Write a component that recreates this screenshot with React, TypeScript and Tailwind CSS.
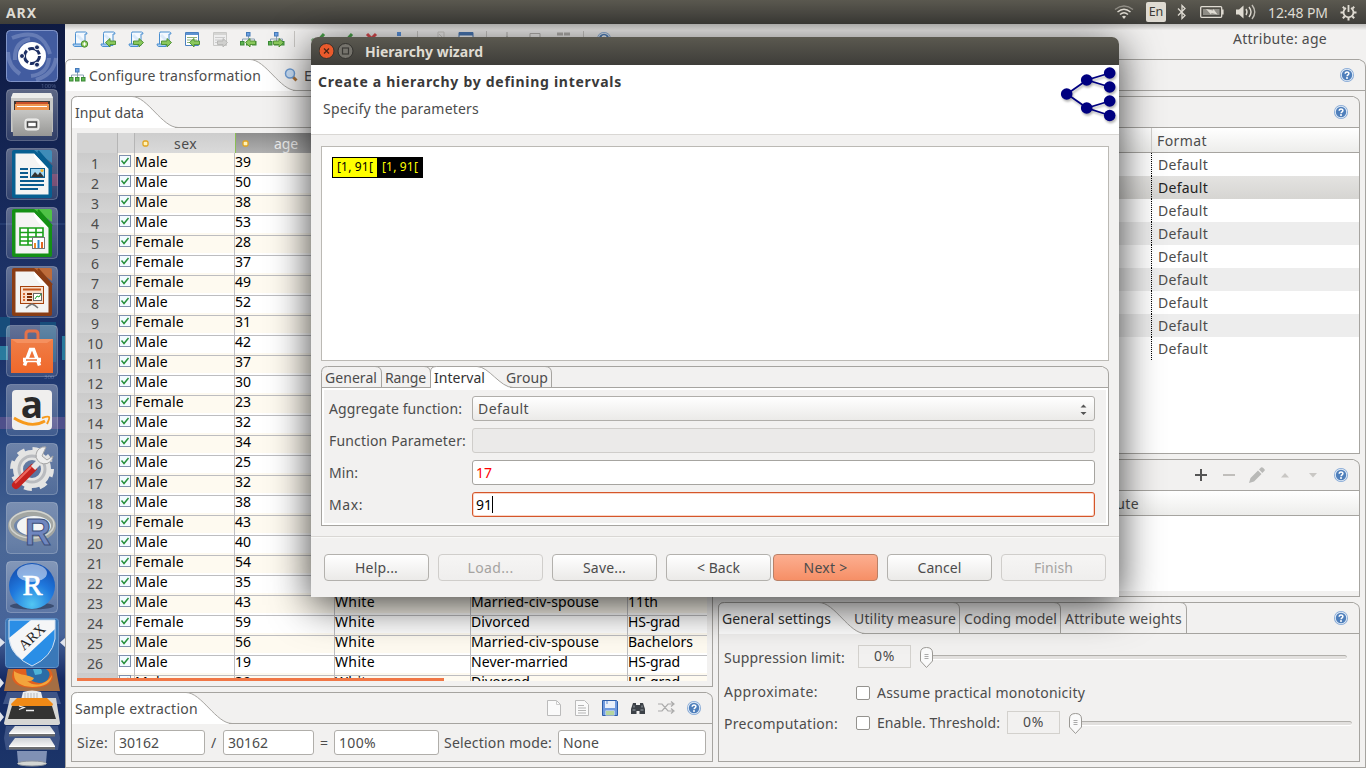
import { useLayoutEffect, useRef, useState, type ReactNode } from "react";

/** Text that spreads its letters so that the run is exactly `w` pixels wide. */
function Fit({ w, children, className = "" }: { w: number; children: string; className?: string }) {
  const ref = useRef<HTMLSpanElement>(null);
  const [spacing, setSpacing] = useState(0);
  useLayoutEffect(() => {
    const el = ref.current;
    if (el) setSpacing((w - el.getBoundingClientRect().width) / children.length);
  }, [w, children]);
  return (
    <span ref={ref} className={`inline-block shrink-0 whitespace-pre ${className}`} style={{ letterSpacing: spacing }}>
      {children}
    </span>
  );
}

/* ---------- tab folders ---------- */

type BarProps = { w: number; h: number; curve: number; start?: number; run?: number; seps?: number[]; plain?: boolean };

function BarOutline({ w, h, curve, start = 0, run = 43, seps = [], plain = false }: BarProps) {
  const s = start + 0.5;
  const b = h - 0.5;
  const tab = `M${s},${h} V6 Q${s},0.5 ${s + 6},0.5 H${curve} C${curve + run * 0.36},0.5 ${curve + run * 0.7},${b} ${curve + run + 3},${b}`;
  return (
    <svg width={w} height={h} className="absolute inset-0" fill="none" stroke="#a6a4a0">
      <path d={`M0.5,${h} V6.5 Q0.5,0.5 6.5,0.5 H${w - 6.5} L${w - 2},3 Q${w - 0.5},5 ${w - 0.5},8 V${h}`} />
      {seps.map((x) => (
        <path key={x} d={`M${x - 6},0.5 Q${x + 0.5},0.5 ${x + 0.5},7 V${b}`} />
      ))}
      {!plain && <path d={`${tab} V${h} Z`} fill="#fff" stroke="none" />}
      {!plain && <path d={tab} />}
      {!plain && <path d={`M${curve + run},${b} H${w}`} />}
      {start > 0 && <path d={`M0,${b} H${start}`} />}
      {plain && <path d={`M0,${b} H${w}`} />}
    </svg>
  );
}

function Folder({ bar, head, className, children, body = "" }: { bar: BarProps; head: ReactNode; className: string; children?: ReactNode; body?: string }) {
  return (
    <section className={`flex flex-col ${className}`}>
      <div className={`relative shrink-0 ${bar.h === 32 ? "h-8" : "h-[22px]"}`}>
        <BarOutline {...bar} />
        <div className="relative flex h-full items-center">{head}</div>
      </div>
      <div className={`min-h-0 flex-1 border-x border-b border-[#a6a4a0] ${body}`}>{children}</div>
    </section>
  );
}

/* ---------- small icons ---------- */

const Help = ({ className = "" }: { className?: string }) => (
  <svg width="16" height="16" viewBox="0 0 16 16" className={`shrink-0 ${className}`}>
    <circle cx="8" cy="8" r="7" fill="#7fa5d4" />
    <circle cx="8" cy="8" r="6.2" fill="#dfe9f5" />
    <circle cx="8" cy="8" r="5.200" fill="#4f7fbb" />
    <path d="M6.2 6.8c0-2.3 3.7-2.3 3.7-.2 0 1.200-1.800 1.300-1.800 2.600" fill="none" stroke="#fff" strokeWidth="1.500" />
    <circle cx="8" cy="11" r="1" fill="#fff" />
  </svg>
);

const greenArrow = (dir: string, grey = false) => (
  <path
    d={dir === "l" ? "M5.500 11.500l4.500-4v2.500h5.500v3.500h-5.500v2.500z" : "M15.500 11.500l-4.500-4v2.500h-5.500v3.500h5.500v2.500z"}
    fill={grey ? "#d0d0ce" : "#8ac85c"}
    stroke={grey ? "#b5b5b3" : "#4a8c30"}
    strokeWidth="0.900"
  />
);

const Scroll = ({ kind }: { kind: string }) => (
  <svg width="17" height="17" viewBox="0 0 17 17" className="shrink-0">
    <path d="M4 1h9.500q1.500 0 1.500 2H13v11.500H3.500V2.500z" fill="#f4f9ff" stroke="#4a8fd0" />
    <path d="M1 13h9v2.500H2.500Q1 15 1 13z" fill="#a9cdf0" stroke="#4a8fd0" />
    <path d="M5 4l7 7" stroke="#dbeafa" strokeWidth="3" />
    {kind === "+" ? (
      <>
        <circle cx="12.500" cy="13" r="3.200" fill="#8ac85c" stroke="#4a8c30" />
        <path d="M12.500 11.200v3.600M10.700 13h3.600" stroke="#fff" strokeWidth="1.200" />
      </>
    ) : (
      greenArrow(kind)
    )}
  </svg>
);

const Sheet = ({ dir, grey = false }: { dir: string; grey?: boolean }) => (
  <svg width="17" height="17" viewBox="0 0 17 17" className="shrink-0">
    <path d="M1.500 1.500h13v13h-13z" fill={grey ? "#eee" : "#fff"} stroke={grey ? "#c9c9c7" : "#4a80c0"} />
    <path d="M2 3h12" stroke={grey ? "#d5d5d3" : "#5d92d0"} strokeWidth="2" />
    <path d="M3 6.500h10M3 9h10M3 11.500h6" stroke={grey ? "#ccc" : "#8fb27a"} />
    {greenArrow(dir, grey)}
  </svg>
);

const Tree = ({ dir }: { dir?: string }) => (
  <svg width="17" height="17" viewBox="0 0 17 17" className="shrink-0">
    <path d="M8.500 4v4M2.500 11V8h12v3M8.500 8v3" fill="none" stroke="#8ba0b4" />
    <rect x="6.500" y="1.500" width="3.500" height="3.500" fill="#6ba0e2" stroke="#447ab8" />
    {[0.5, 6.5, 12.5].map((x) => (
      <rect key={x} x={x} y="10.500" width="3.500" height="3.500" fill="#5fb452" stroke="#3a8a36" />
    ))}
    {dir && greenArrow(dir)}
  </svg>
);

const Sep = ({ className = "" }: { className?: string }) => <i className={`h-4 w-px shrink-0 bg-[#c9c7c4] ${className}`} />;

function Toolbar() {
  return (
    <div className="flex h-[35px] shrink-0 items-start bg-gradient-to-b from-[#bfbebc] via-[#f2f1f0] via-[18%] to-[#f2f1f0] pl-[7px] pt-[7px]">
      <div className="flex gap-[11px]">
        <Scroll kind="+" />
        <Scroll kind="l" />
        <Scroll kind="r" />
        <Scroll kind="r" />
        <Sheet dir="l" />
        <Sheet dir="r" grey />
        <Tree dir="l" />
        <Tree dir="r" />
      </div>
      <Sep className="ml-[9px]" />
      <svg width="100" height="16" viewBox="0 0 100 16" className="ml-4 shrink-0" fill="none" strokeWidth="3">
        <path d="M1 8l4 4 8-9M29 8l4 4 8-9" stroke="#4aa14a" />
        <path d="M56 3l9 9M65 3l-9 9" stroke="#dc4b50" />
        <rect x="86" y="1" width="4" height="4" fill="#5b93dc" />
      </svg>
      <Sep className="ml-1.5" />
      <svg width="52" height="16" viewBox="0 0 52 16" className="ml-[14px] shrink-0">
        <path d="M6 1h6v12H6zM7 3l4 4" stroke="#cfcdca" fill="none" />
        <path d="M27 1.500h14v13H27z" fill="#fff" stroke="#4a78b5" />
        <path d="M27 3h14" stroke="#4a78b5" strokeWidth="3" />
      </svg>
      <Sep className="ml-0.5" />
      <svg width="80" height="16" viewBox="0 0 80 16" className="ml-3 shrink-0" fill="none" stroke="#b3b1ae">
        <path d="M8 1v4l-3 8M8 5l3 8M31 2.500h10v9H31z" />
        <path d="M58 3h6M65 3h6" strokeWidth="3" />
      </svg>
      <Sep className="ml-1" />
      <Help className="ml-3" />
      <Fit w={94} className="ml-[621px] mt-[-2px] leading-5">Attribute: age</Fit>
    </div>
  );
}

/* ---------- top panel ---------- */

function TopPanel() {
  return (
    <header className="flex h-6 shrink-0 items-center bg-gradient-to-b from-[#5b5950] to-[#3e3d39] text-[#dfdbd2]">
      <Fit w={31} className="ml-1.5 text-[14px] font-bold">ARX</Fit>
      <div className="ml-auto flex items-center pr-[9px]">
        <svg width="20" height="16" viewBox="0 0 20 16" fill="none" stroke="currentColor" strokeWidth="1.500">
          <path d="M1 5.500Q10-1.500 19 5.500" opacity=".45" />
          <path d="M3.500 8Q10 2.500 16.500 8M6 10.500Q10 7 14 10.500" />
          <path d="M8 12.500Q10 11 12 12.500L10 15z" fill="currentColor" stroke="none" />
        </svg>
        <span className="ml-3 flex h-5 w-5 items-center justify-center rounded-[2px] bg-[#dfdbd2] text-[12.5px] text-[#3c3b37]">En</span>
        <svg width="10" height="16" viewBox="0 0 10 16" className="ml-[11px]" fill="none" stroke="currentColor" strokeWidth="1.300">
          <path d="M1 4.500l7 7-3 3V1.500l3 3-7 7" />
        </svg>
        <svg width="24" height="14" viewBox="0 0 24 14" className="ml-[13px]">
          <rect x=".7" y="1.700" width="21" height="10.600" rx="1" fill="none" stroke="currentColor" strokeWidth="1.300" />
          <path d="M22 4.500h1.600v5H22z" fill="currentColor" />
          <rect x="3" y="4" width="16.500" height="6" fill="#8f8d86" />
          <path d="M6 4l7 1.500.5-1.500 4 5.500-6-1.500-.5 1.500z" fill="currentColor" />
        </svg>
        <svg width="20" height="16" viewBox="0 0 20 16" className="ml-3" fill="none" stroke="currentColor" strokeWidth="1.400">
          <path d="M0 5.500h3l4.500-4v13l-4.500-4H0z" fill="currentColor" stroke="none" />
          <path d="M10 5q2 3 0 6M13 3q4 5 0 10" />
          <path d="M16 1q5.500 7 0 14" opacity=".8" />
        </svg>
        <Fit w={60} className="ml-3 text-[14px]">12:48 PM</Fit>
        <svg width="17" height="17" viewBox="0 0 17 17" className="ml-3" fill="none" stroke="currentColor">
          <path d="M6 4a5 5 0 1 0 5 0" strokeWidth="1.800" />
          <path d="M8.500 1v7" strokeWidth="1.800" />
          <path d="M.5 8.500h2.500M14 8.500h2.500M2.800 14.200l2-2M14.200 14.200l-2-2M2.800 2.800l1.800 1.800M14.200 2.800l-1.800 1.800M8.500 14v2.500" strokeWidth="2" />
        </svg>
      </div>
    </header>
  );
}

/* ---------- launcher ---------- */

function Office({ dark, light, children }: { dark: string; light: string; children: ReactNode }) {
  return (
    <>
      <path d="M8 2h22l16 17v29q0 2-2 2H8q-2 0-2-2V4q0-2 2-2z" fill={dark} />
      <path d="M28 2h16q2 0 2 2v11z" fill={light} />
      <path d="M32 3l14 16" stroke={dark} strokeWidth="2" />
      <path d="M9.500 5.500H28L42.500 21v25.500h-33z" fill="#f4f4f3" />
      <path d="M28 5.500V9q6 12 14.500 12z" fill="#fff" />
      {children}
    </>
  );
}

const tiles: ReactNode[] = [
  <>
    <rect x=".5" y=".5" width="51" height="51" rx="4" fill="#425ca0" stroke="#8094c8" />
    <g fill="none" stroke="#a9b8dc" strokeWidth="4" opacity=".35">
      <path d="M9 30Q8 12 24 9M6 8q30-12 38 16M43 28q-1 16-18 18M14 44Q2 36 2 22M30 50q18-6 20-22" />
    </g>
    <circle cx="26" cy="26" r="14" fill="#fff" />
    <circle cx="26" cy="26" r="7.500" fill="none" stroke="#1c2e63" strokeWidth="3" strokeDasharray="13.700 2" />
    <circle cx="16" cy="26" r="2.500" fill="#1c2e63" stroke="#fff" />
    <circle cx="31" cy="17.300" r="2.500" fill="#1c2e63" stroke="#fff" />
    <circle cx="31" cy="34.700" r="2.500" fill="#1c2e63" stroke="#fff" />
  </>,
  <>
    <path d="M7 4h38l2 5v34H5V9z" fill="#c9c9c7" />
    <path d="M7 4h38l2 5H5z" fill="#ececea" />
    <rect x="8" y="12" width="36" height="10" fill="#3f3a36" />
    <path d="M10 13h32v5H10z" fill="#c8502a" />
    <path d="M9 15h34v7H9z" fill="#ee9650" />
    <path d="M11 17.500h30" stroke="#fff" />
    <path d="M8 21h36l3 3-1 23H7L6 24z" fill="url(#steel)" />
    <rect x="19" y="30" width="14" height="11" rx="2.500" fill="#dededc" stroke="#f5f5f4" />
    <rect x="21.500" y="33" width="9" height="5" fill="#fff" stroke="#444" strokeWidth="1.500" />
  </>,
  <Office dark="#075f91" light="#3f8cb8">
    <path d="M14 21h8M14 25h8M14 29h8M14 33h24M14 37h24M14 41h18" stroke="#0c5c8f" strokeWidth="2" />
    <rect x="24.500" y="20.500" width="14" height="9" fill="#a5d8f3" stroke="#0c5c8f" />
    <path d="M25 29l4-5 3 3 2-3 4 5z" fill="#333" />
    <circle cx="36" cy="22.500" r="1.500" fill="#f6b22e" />
  </Office>,
  <Office dark="#149015" light="#4fc246">
    <path d="M14 21h23v17H14zM14 25.500h23M14 30h23M14 34h23M22 21v17M30 21v17" fill="#fff" stroke="#18a018" strokeWidth="1.600" />
    <rect x="26.500" y="30.500" width="12" height="11" fill="#fff" stroke="#777" />
    <path d="M29 41v-5" stroke="#f08a28" strokeWidth="2" />
    <path d="M32.500 41v-8" stroke="#2b82cc" strokeWidth="2" />
    <path d="M36 41v-6" stroke="#e4651f" strokeWidth="2" />
  </Office>,
  <Office dark="#8a3d15" light="#bd6c3b">
    <rect x="14.500" y="20.500" width="23" height="17" fill="#f8dfcc" stroke="#a6420d" />
    <path d="M17 23.500h18" stroke="#c4561c" strokeWidth="2" />
    <path d="M17 28h2M17 31h2M17 34h2" stroke="#d76b33" strokeWidth="2" />
    <path d="M21 28h5M21 31h5M21 34h5" stroke="#7c2c04" strokeWidth="2" />
    <rect x="27.500" y="27.500" width="8" height="7" fill="#fff" stroke="#666" />
    <path d="M29 33l2-3 2 1 2-3" fill="none" stroke="#19a22c" />
    <path d="M20 42q3-3 6-4 3 1 6 4" fill="none" stroke="#777" strokeWidth="1.500" />
  </Office>,
  <>
    <path d="M20 18V9q0-3 3-3h6q3 0 3 3v9" fill="none" stroke="#e5724a" strokeWidth="3" />
    <path d="M5 14h42v34H5z" fill="url(#bag)" />
    <path d="M5 14h42l-6 4H11z" fill="#f5905e" />
    <path d="M18.500 40.500l6-16h3l6 16" fill="none" stroke="#fff" strokeWidth="3.500" />
    <path d="M17 35h18" stroke="#fff" strokeWidth="4.500" />
    <path d="M20 35h11" stroke="#ee7136" strokeWidth="1.500" />
  </>,
  <>
    <rect x="6" y="6" width="40" height="40" rx="4" fill="#f0efee" />
    <text x="26" y="34" textAnchor="middle" fontFamily="Open Sans, sans-serif" fontWeight="700" fontSize="37" fill="#2a2a2a">a</text>
    <path d="M8 34q17 11 31 3" fill="none" stroke="#f79a1c" strokeWidth="2.800" />
    <path d="M36 34q6-2 7-1t-2 7" fill="none" stroke="#f79a1c" strokeWidth="2" />
  </>,
  <>
    <circle cx="26" cy="26" r="14" fill="none" stroke="#e4e4e3" strokeWidth="10" />
    <circle cx="26" cy="26" r="19.500" fill="none" stroke="#e4e4e3" strokeWidth="5" strokeDasharray="7.600 7.700" />
    <circle cx="26" cy="26" r="13" fill="none" stroke="#b9bbbf" strokeWidth="3" />
    <path d="M10 42l17-17" stroke="#c5221f" strokeWidth="8" strokeLinecap="round" />
    <path d="M9 40l16-16" stroke="#ee6a60" strokeWidth="2" />
    <path d="M27 25l8-8" stroke="#e6e6e6" strokeWidth="6" />
    <path d="M40 4a8.500 8.500 0 1 0 7 9l-6 4-5-4z" fill="#ededed" stroke="#a5a5a5" />
  </>,
  <>
    <ellipse cx="26" cy="24" rx="21" ry="13" fill="none" stroke="#a3a6a2" strokeWidth="6" />
    <ellipse cx="28" cy="24" rx="17" ry="10" fill="#f2f4f5" />
    <ellipse cx="26" cy="22.500" rx="22" ry="13.500" fill="none" stroke="#d2d4d0" strokeWidth="1.500" />
    <text x="19" y="43" fontFamily="Liberation Sans, sans-serif" fontWeight="700" fontSize="36" fill="#6f86bf" stroke="#3c4e78" strokeWidth="1">R</text>
  </>,
  <>
    <ellipse cx="26" cy="45" rx="22" ry="3.500" fill="#22314e" opacity=".6" />
    <circle cx="26" cy="25" r="23" fill="url(#orb)" />
    <ellipse cx="26" cy="12" rx="15" ry="9" fill="#fff" opacity=".5" />
    <text x="26.500" y="34" textAnchor="middle" fontFamily="Liberation Serif, serif" fontSize="30" fill="#fff" stroke="#fff" strokeWidth=".7">R</text>
  </>,
];

function Launcher() {
  return (
    <nav className="relative flex w-[65px] shrink-0 flex-col overflow-hidden bg-[linear-gradient(180deg,#0e1a42_0%,#172a5c_25%,#1d3266_33%,#1b2f66_43%,#26467f_55%,#4a6796_70%,#47649a_82%,#152a64_88%,#1c3569_100%)]">
      <svg width="65" height="744" className="absolute inset-0">
        <defs>
          <radialGradient id="orb" cx=".5" cy=".9" r=".8">
            <stop offset="0" stopColor="#52c6f2" />
            <stop offset=".6" stopColor="#1f78dd" />
            <stop offset="1" stopColor="#1756b8" />
          </radialGradient>
          <linearGradient id="glass" x2="0" y2="1">
            <stop offset="0" stopColor="#fff" stopOpacity=".32" />
            <stop offset="1" stopColor="#fff" stopOpacity=".12" />
          </linearGradient>
          <linearGradient id="steel" x2="0" y2="1">
            <stop offset="0" stopColor="#c6c6c4" />
            <stop offset="1" stopColor="#979795" />
          </linearGradient>
          <linearGradient id="drive" x2="0" y2="1">
            <stop offset="0" stopColor="#cfd2d6" />
            <stop offset="1" stopColor="#f3f3f3" />
          </linearGradient>
          <linearGradient id="bag" x2="0" y2="1">
            <stop offset="0" stopColor="#ef7e48" />
            <stop offset="1" stopColor="#f0682a" />
          </linearGradient>
        </defs>
        <path d="M0 293h10v20H0zM40 298h16v40H40z" fill="#155a85" opacity=".7" />
        <path d="M0 322h8v14H0zM62 312h3v24h-3z" fill="#2f9ab5" opacity=".7" />
        <path d="M52 150h6v12h-6z" fill="#8c2c58" opacity=".6" />
        <path d="M0 393h65v12H0z" fill="#7a5c9a" opacity=".5" />
        <path d="M0 200h65" stroke="#4a68a0" opacity=".5" />
        <g fill="#8fa2cc" fontSize="6" opacity=".45">
          <text x="41" y="64">100%</text>
          <text x="44" y="355">300</text>
        </g>
      </svg>
      <div className="relative flex flex-col gap-[7px] pl-1.5 pt-1.5">
        {tiles.map((tile, i) => (
          <svg key={i} width="52" height="52" viewBox="0 0 52 52">
            <rect x=".5" y=".5" width="51" height="51" rx="4" fill="url(#glass)" stroke="#fff" strokeOpacity=".25" />
            {tile}
          </svg>
        ))}
      </div>
      <svg width="65" height="153" viewBox="0 0 65 153" className="relative mt-0.5 shrink-0">
        <path d="M0 23l5 4.500-5 4.500zM65 23l-5 4.500 5 4.500zM0 63l4 5-4 5zM0 97l4 5-4 5z" fill="#dfe3ec" />
        <path d="M8 54h48l4 22H4z" fill="#b5753f" opacity=".9" />
        <path d="M14 54h36q3 4 3 8-2 11-21 11-19-1-20-11 0-4 2-8z" fill="#e0601f" />
        <path d="M26 54h20q5 3 3 8-2 6-10 6-8-1-12-6z" fill="#2b6ca6" />
        <path d="M33 54h8q2 3 0 5l-6 1z" fill="#4db4d8" />
        <path d="M14 56q4 3 11 4 5 1 9 3-2 4-7 3 6 5 14 3 8-3 11-9-1 12-20 12-17-1-18-12z" fill="#f3a43c" />
        <path d="M7 77h50l4 12H3z" fill="#8aa0c8" opacity=".35" />
        <path d="M23 77q9-3 18 0l2 8H21z" fill="#eceef0" />
        <path d="M25 78v5M28 78v5M31 78v5M34 78v5M37 78v5" stroke="#b9bcc0" />
        <path d="M10 83h46l4 25q0 2-3 2H7q-3 0-3-2z" fill="#d6d6d4" />
        <path d="M17 83h30l6 6q0 2-2 2H13q-2 0-2-2z" fill="#f08a16" />
        <path d="M12 91h40l4 13H8z" fill="#333332" />
        <path d="M19 91l5 1.500-5 2M26 95.500h8" stroke="#eee" fill="none" strokeWidth="1.300" />
        <path d="M6 111h52l2 12-2 12H6l-2-12z" fill="#8aa0c8" opacity=".3" />
        <path d="M15 111h35l5 7H9z" fill="url(#drive)" />
        <path d="M9 118h46v3.500H9z" fill="#6d6e70" />
        <path d="M9 118.500h46" stroke="#fff" />
        <path d="M15 123h35l5 8H9z" fill="url(#drive)" />
        <path d="M9 131h46v3.500H9z" fill="#6d6e70" />
        <path d="M9 131.500h46" stroke="#fff" />
        <path d="M17 136h30l-1 12H18z" fill="#9aa9c8" opacity=".8" />
        <ellipse cx="32" cy="148.500" rx="14.500" ry="2.500" fill="#d3d6d4" stroke="#8e949c" />
        <rect x="5.500" y="3.500" width="53" height="49" rx="3" fill="#3a78b8" stroke="#5f8fc6" />
        <path d="M9 5h46v19q-3 18-23 27Q12 42 9 24z" fill="#2a8ee6" />
        <path d="M31 5h24v9L22 45q-13-9-13-22z" fill="#f5f6f7" />
        <path d="M9 5h46v19q-3 18-23 27Q12 42 9 24z" fill="none" stroke="#cfe0f2" />
        <text transform="translate(24,36) rotate(-43)" fontFamily="Liberation Serif, serif" fontSize="14.500" fill="#222">ARX</text>
      </svg>
    </nav>
  );
}

/* ---------- input table ---------- */

const people: [string, number][] = [
  ["Male", 39], ["Male", 50], ["Male", 38], ["Male", 53], ["Female", 28], ["Female", 37], ["Female", 49],
  ["Male", 52], ["Female", 31], ["Male", 42], ["Male", 37], ["Male", 30], ["Female", 23], ["Male", 32],
  ["Male", 34], ["Male", 25], ["Male", 32], ["Male", 38], ["Female", 43], ["Male", 40], ["Female", 54],
  ["Male", 35], ["Male", 43], ["Female", 59], ["Male", 56], ["Male", 19], ["Male", 39],
];
const more: Record<number, [string, number, string, number]> = {
  22: ["Married-civ-spouse", 128, "11th", 30],
  23: ["Divorced", 59, "HS-grad", 52],
  24: ["Married-civ-spouse", 128, "Bachelors", 65],
  25: ["Never-married", 97, "HS-grad", 52],
  26: ["Divorced", 59, "HS-grad", 52],
};
const cell = "border-b border-r border-[#bdbdc0] leading-[17px]";

const Dot = () => (
  <svg width="7" height="7" className="shrink-0">
    <rect x="1" y="1" width="5" height="5" rx="1.500" fill="#fff3b8" stroke="#e0a320" strokeWidth="1.300" />
  </svg>
);

function InputTable() {
  return (
    <div className="relative h-[548px] w-[630px] overflow-hidden text-black">
      <div className="grid h-5 grid-cols-[41px_17px_100px_100px_136px_157px_79px] text-[#4c4c4c]">
        <i className="border-r border-[#b5b5b5] bg-[#d3d3d3]" />
        <i className="border-r border-[#b5b5b5] bg-[#d8d8d8]" />
        <div className="flex bg-gradient-to-b from-[#cdcdcd] to-[#dadada] pl-[7px] pt-[7px]">
          <Dot />
          <Fit w={23} className="ml-[25px] mt-[-4px] leading-4">sex</Fit>
        </div>
        <div className="flex border-l border-[#8bbf55] bg-gradient-to-b from-[#8e8e8e] to-[#b0b0b0] pl-[6px] pt-[7px] text-[#eee]">
          <Dot />
          <Fit w={24} className="ml-[25px] mt-[-4px] leading-4">age</Fit>
        </div>
      </div>
      {people.map(([sex, age], i) => (
        <div key={i} className={`grid h-5 grid-cols-[41px_17px_100px_100px_136px_157px_79px] ${i % 2 ? "bg-white" : "bg-[#fefaf0]"}`}>
          <div className="flex justify-center border-b border-r border-[#c4c4c4] bg-gradient-to-b from-[#cbcbcb] to-[#d5d5d5] pr-1 leading-[22px] text-[#4c4c4c]">
            {i < 26 && <Fit w={i < 9 ? 8 : 16}>{String(i + 1)}</Fit>}
          </div>
          <div className="border-b border-r border-[#bdbdc0] pl-px pt-0.5">
            <svg width="12" height="12">
              <rect x=".5" y=".5" width="11" height="11" fill="#f2faff" stroke="#7f90ad" />
              <path d="M2.500 5.500l2.500 3 4.500-5.500" fill="none" stroke="#26903a" strokeWidth="1.500" />
            </svg>
          </div>
          <div className={cell}><Fit w={sex === "Male" ? 33 : 49}>{sex}</Fit></div>
          <div className={cell}><Fit w={16}>{String(age)}</Fit></div>
          <div className={cell}>{more[i] && <Fit w={40}>White</Fit>}</div>
          <div className={cell}>{more[i] && <Fit w={more[i][1]}>{more[i][0]}</Fit>}</div>
          <div className="border-b border-[#bdbdc0] leading-[17px]">{more[i] && <Fit w={more[i][3]}>{more[i][2]}</Fit>}</div>
        </div>
      ))}
      <div className="absolute bottom-0 left-0 h-[3px] w-[367px] bg-[#f07746]" />
    </div>
  );
}

const field = "flex h-[25px] items-center rounded-[3px] border border-[#b0aeaa] bg-white pl-1";

function SampleIcons() {
  return (
    <div className="ml-auto flex items-center gap-3 pr-[11px]">
      <svg width="16" height="16"><path d="M1.500.5h9l4 4v11h-13z" fill="#fafafa" stroke="#bbb" /><path d="M10.500.5v4h4" fill="none" stroke="#ccc" /></svg>
      <svg width="16" height="16"><path d="M1.500.5h9l4 4v11h-13z" fill="#fafafa" stroke="#bbb" /><path d="M4 5.500h6M4 8h8M4 10.500h8M4 13h8" stroke="#b5b5b5" /></svg>
      <svg width="16" height="16"><path d="M.5.5h14l1 1v14H.5z" fill="#6f9ade" stroke="#2c5da8" /><path d="M3 1h10v7H3z" fill="#e9f0fa" /><path d="M3.500 10.500h9v5h-9z" fill="#f2f7f0" /><path d="M4 12h8M4 14h8" stroke="#7ab34c" /><path d="M5 1v3" stroke="#5888d2" /></svg>
      <svg width="16" height="16"><path d="M3 3h3v2h4V3h3l2 6v5H9.500v-3h-3v3H1V9z" fill="#3c4147" /><path d="M2.500 10h3M10.500 10h3M4 5.500v2M12 5.500v2" stroke="#9aa3ab" /></svg>
      <svg width="17" height="16" fill="none" stroke="#aaa" strokeWidth="1.200"><path d="M0 4h4l6 7h5M0 11h4l6-7h5M13 1.500l3 2.500-3 2.500M13 8.500l3 2.500-3 2.500" /></svg>
      <Help className="ml-[-1px]" />
    </div>
  );
}

const Slider = ({ className = "" }: { className?: string }) => (
  <div className={`flex h-[23px] items-center pt-0.5 ${className}`}>
    <svg width="13" height="21" viewBox="0 0 13 21" className="z-10 mr-[-1px] shrink-0">
      <path d="M.5 6q0-5.500 6-5.500t6 5.500v8l-6 6.500-6-6.500z" fill="#fafafa" stroke="#9b9995" />
      <path d="M4.500 7.500h4M4.500 9.500h4M4.500 11.500h4" stroke="#aaa" />
    </svg>
    <i className="mt-[-1px] h-[5px] flex-1 rounded-r-sm border-b border-t border-b-white border-t-[#b1afab] bg-[#e2e0de]" />
  </div>
);

const percentBox = "flex h-[23px] w-[53px] shrink-0 items-center justify-center border border-[#d3d1cd] pb-0.5";
const checkbox = "h-3.5 w-3.5 shrink-0 rounded-[2px] border border-[#94928e] bg-white";

function Workspace() {
  return (
    <main className="flex w-[1301px] flex-col bg-[#f2f1f0]">
      <Toolbar />
      <Folder
        className="h-[709px]"
        bar={{ w: 1301, h: 32, curve: 185 }}
        body="flex gap-[5px] px-[5px] pt-[5px]"
        head={
          <>
            <span className="ml-1"><Tree /></span>
            <Fit w={172} className="ml-[3px]">Configure transformation</Fit>
            <svg width="15" height="15" className="ml-[23px]">
              <path d="M8.500 8.500l4 4" stroke="#a9713a" strokeWidth="3" />
              <circle cx="6" cy="5.500" r="4.500" fill="#c9def5" stroke="#6b9ad2" strokeWidth="1.500" />
            </svg>
            <span className="ml-[5px]">E</span>
            <Help className="ml-auto mr-[11px]" />
          </>
        }
      >
        <div className="flex w-[642px] flex-col gap-[5px]">
          <Folder className="h-[591px]" bar={{ w: 642, h: 32, curve: 61 }} body="pl-[5px] pt-[5px]" head={<Fit w={69} className="ml-1">Input data</Fit>}>
            <InputTable />
          </Folder>
          <Folder
            className="h-[70px]"
            bar={{ w: 642, h: 32, curve: 115 }}
            body="flex items-start pl-[5px] pt-1.5 leading-[25px]"
            head={<><Fit w={123} className="ml-1">Sample extraction</Fit><SampleIcons /></>}
          >
            <Fit w={31}>Size:</Fit>
            <div className={`ml-1.5 w-[91px] shrink-0 ${field}`}><Fit w={40}>30162</Fit></div>
            <span className="ml-1.5 w-[6px]">/</span>
            <div className={`ml-[6px] w-[91px] shrink-0 ${field}`}><Fit w={40}>30162</Fit></div>
            <span className="ml-1.5 w-2">=</span>
            <div className={`ml-1.5 w-[105px] shrink-0 ${field}`}><Fit w={37}>100%</Fit></div>
            <Fit w={108} className="ml-[5px]">Selection mode:</Fit>
            <div className={`ml-1.5 w-[148px] shrink-0 ${field}`}><Fit w={36}>None</Fit></div>
          </Folder>
        </div>
        <div className="flex w-[642px] flex-col gap-[5px]">
          <Folder className="h-[358px]" bar={{ w: 642, h: 32, curve: 0, plain: true }} body="bg-white" head={<Help className="ml-auto mr-[11px]" />}>
            <div className="flex h-[25px] items-center border-b border-[#a6a4a0] bg-gradient-to-b from-white to-[#ededeb]">
              <div className="ml-[432px] flex h-full items-center border-l border-[#d2d0cd] pl-[5px]"><Fit w={50}>Format</Fit></div>
            </div>
            {Array.from({ length: 9 }, (_, i) => (
              <div key={i} className={`flex h-[23px] items-center ${i === 1 ? "bg-gradient-to-b from-[#e4e3e1] to-[#d6d5d2] text-[#222]" : i % 2 ? "bg-[#ededed]" : "bg-white"}`}>
                <div className="ml-[432px] flex h-full items-center border-l border-dotted border-black pl-1.5"><Fit w={50}>Default</Fit></div>
              </div>
            ))}
          </Folder>
          <Folder
            className="h-[138px]"
            bar={{ w: 642, h: 32, curve: 0, plain: true }}
            body="pb-[5px]"
            head={
              <div className="ml-auto flex items-center gap-3 pr-[11px]">
                <svg width="16" height="16" stroke="#555" strokeWidth="2"><path d="M2 8h12M8 2v12" /></svg>
                <svg width="16" height="16" stroke="#c0bebb" strokeWidth="2"><path d="M2 8h12" /></svg>
                <svg width="16" height="16" fill="#b9b9b7"><path d="M0 16l1.500-5 7.500-7.500 3.500 3.500L5 14.500zM10 2.500L12 .5q1-.8 2 .2l1.500 1.500q.8 1-.2 1.800l-2 2z" /></svg>
                <svg width="16" height="16" fill="#c9c7c4"><path d="M8 6l4 4.500H4z" /></svg>
                <svg width="16" height="16" fill="#c9c7c4"><path d="M8 10.500L12 6H4z" /></svg>
                <Help />
              </div>
            }
          >
            <div className="flex h-[25px] items-center border-b border-[#a6a4a0] bg-gradient-to-b from-white to-[#ededeb]">
              <div className="flex w-[420px] justify-end"><Fit w={62}>Attribute</Fit></div>
            </div>
            <div className="h-[75px] bg-white" />
          </Folder>
          <Folder
            className="h-[160px]"
            bar={{ w: 642, h: 32, curve: 101, seps: [241, 342, 468] }}
            body="flex flex-col pl-[5px] pt-[11px]"
            head={
              <>
                <Fit w={109} className="ml-1 text-[#2f2f2f]">General settings</Fit>
                <Fit w={102} className="ml-[23px]">Utility measure</Fit>
                <Fit w={93} className="ml-2">Coding model</Fit>
                <Fit w={117} className="ml-2">Attribute weights</Fit>
                <Help className="ml-auto mr-[11px]" />
              </>
            }
          >
            <div className="flex h-[23px] items-center">
              <div className="w-[134px] shrink-0 pt-0.5"><Fit w={121}>Suppression limit:</Fit></div>
              <div className={percentBox}><Fit w={21}>0%</Fit></div>
              <Slider className="ml-[9px] mr-3 flex-1" />
            </div>
            <div className="mt-[14px] flex h-[21px] items-center">
              <div className="w-[132px] shrink-0 pb-0.5"><Fit w={94}>Approximate:</Fit></div>
              <i className={checkbox} />
              <Fit w={208} className="ml-[7px]">Assume practical monotonicity</Fit>
            </div>
            <div className="mt-[8px] flex h-[23px] items-center">
              <div className="w-[132px] shrink-0 pt-0.5"><Fit w={114}>Precomputation:</Fit></div>
              <i className={checkbox} />
              <Fit w={123} className="ml-[7px]">Enable. Threshold:</Fit>
              <div className={`ml-[7px] ${percentBox}`}><Fit w={21}>0%</Fit></div>
              <Slider className="ml-[9px] mr-[7px] flex-1" />
            </div>
          </Folder>
        </div>
      </Folder>
    </main>
  );
}

/* ---------- hierarchy wizard ---------- */

const nodes: [number, number][] = [[7, 29], [27, 15], [27, 43], [50, 8], [50, 22], [50, 36], [50, 50.5]];

function Button({ label, w, kind = "", className = "ml-[9px]" }: { label: string; w: number; kind?: string; className?: string }) {
  const skin =
    kind === "primary"
      ? "border-[#b98067] bg-gradient-to-b from-[#fcae90] to-[#f68f66]"
      : kind === "off"
        ? "border-[#d0cecb] bg-gradient-to-b from-[#f6f5f4] to-[#efeeed] text-[#a5a3a1]"
        : "border-[#b3b1ad] bg-gradient-to-b from-white to-[#ebeae8]";
  return (
    <button className={`flex h-[27px] w-[105px] items-center justify-center rounded-[4px] border ${skin} ${className}`}>
      <Fit w={w}>{label}</Fit>
    </button>
  );
}

function Wizard() {
  const row = "flex h-[25px] items-center";
  const input = "h-[25px] w-[623px] flex items-center rounded-[3px] border pl-[3px]";
  return (
    <div className="absolute left-[311px] top-[37px] flex h-[560px] w-[808px] flex-col rounded-t-[7px] bg-[#f2f1f0] shadow-[0_8px_40px_rgba(0,0,0,0.75)]">
      <div className="flex h-7 shrink-0 items-center rounded-t-[7px] bg-gradient-to-b from-[#5b5950] to-[#3e3d39] pl-2 text-[#dfdbd2]">
        <svg width="36" height="16">
          <circle cx="7.500" cy="8" r="7.500" fill="#ea5a2c" stroke="#33322e" />
          <path d="M5 5.500l5 5M10 5.500l-5 5" stroke="#4a2415" strokeWidth="1.200" />
          <circle cx="26.500" cy="8" r="7.500" fill="#75736c" stroke="#33322e" />
          <rect x="23.500" y="5" width="6" height="6" fill="none" stroke="#3a3935" strokeWidth="1.200" />
        </svg>
        <Fit w={118} className="ml-2.5 font-bold">Hierarchy wizard</Fit>
      </div>
      <div className="flex h-[70px] shrink-0 justify-between border-b border-[#d9d7d4] bg-white">
        <div className="flex flex-col items-start pl-[7px] pt-[7px] leading-5">
          <Fit w={304} className="text-[14px] font-bold text-[#3a3a3a]">Create a hierarchy by defining intervals</Fit>
          <Fit w={156} className="ml-[5px] mt-[7px]">Specify the parameters</Fit>
        </div>
        <svg width="58" height="60" className="mr-px drop-shadow-[1px_2px_1px_rgba(0,0,0,0.3)]" fill="#000080">
          <path d="M50 8L27 15 50 22M50 36L27 43 50 50.500M27 15L7 29 27 43" fill="none" stroke="#000080" strokeWidth="1.800" />
          {nodes.map(([x, y]) => <circle key={`${x}-${y}`} cx={x - 0.3} cy={y} r="5.800" />)}
        </svg>
      </div>
      <div className="ml-[10px] mt-[11px] h-[215px] w-[788px] shrink-0 border border-[#bbb9b4] bg-white pl-[10px] pt-[10px]">
        <div className="flex h-[21px] w-[91px] border border-black bg-black text-[12px] leading-[17px]">
          <div className="w-11 bg-[#ffff00] pl-1 text-black"><Fit w={36}>[1, 91[</Fit></div>
          <div className="pl-[5px] text-[#ffff00]"><Fit w={36}>[1, 91[</Fit></div>
        </div>
      </div>
      <Folder
        className="ml-[10px] mt-[5px] h-[160px] w-[788px] shrink-0"
        bar={{ w: 788, h: 22, curve: 156, start: 109, run: 33, seps: [60, 109, 230] }}
        body="bg-white p-0.5"
        head={
          <>
            <Fit w={52} className="ml-1">General</Fit>
            <Fit w={41} className="ml-2">Range</Fit>
            <Fit w={51} className="ml-2 text-[#333]">Interval</Fit>
            <Fit w={42} className="ml-[21px]">Group</Fit>
          </>
        }
      >
        <div className="flex h-full flex-col gap-[7px] bg-[#f2f1f0] pl-[5px] pt-1.5">
          <div className={row}>
            <div className="w-[143px]"><Fit w={133}>Aggregate function:</Fit></div>
            <div className={`${input} justify-between border-[#b0aeaa] bg-gradient-to-b from-white to-[#ebeae8] pr-[7px]`}>
              <Fit w={51} className="ml-0.5">Default</Fit>
              <svg width="7" height="14" fill="#555"><path d="M3.500 2.500L6.500 5.500h-6zM3.500 13l3-3h-6z" /></svg>
            </div>
          </div>
          <div className={row}>
            <div className="w-[143px]"><Fit w={137}>Function Parameter:</Fit></div>
            <div className={`${input} border-[#cfcdca] bg-[#ebeae9]`} />
          </div>
          <div className={row}>
            <div className="w-[143px]"><Fit w={29}>Min:</Fit></div>
            <div className={`${input} border-[#a6a4a0] bg-white text-[#f00]`}><Fit w={16}>17</Fit></div>
          </div>
          <div className={row}>
            <div className="w-[143px]"><Fit w={34}>Max:</Fit></div>
            <div className={`${input} border-[#d4562a] bg-white text-black shadow-[inset_0_0_0_1px_#fbd5c6]`}>
              <Fit w={16}>91</Fit>
              <i className="h-[17px] w-px bg-black" />
            </div>
          </div>
        </div>
      </Folder>
      <div className="mt-[10px] h-0.5 shrink-0 border-t border-[#d9d7d4] bg-[#f8f8f7]" />
      <div className="ml-[13px] mt-4 flex">
        <Button label="Help..." w={43} className="" />
        <Button label="Load..." w={46} kind="off" />
        <Button label="Save..." w={43} />
        <Button label="< Back" w={43} />
        <Button label="Next >" w={44} kind="primary" className="ml-0.5" />
        <Button label="Cancel" w={44} />
        <Button label="Finish" w={39} kind="off" />
      </div>
    </div>
  );
}

export default function App() {
  return (
    <div className="relative flex h-[768px] w-[1366px] flex-col overflow-hidden bg-[#f2f1f0] font-['Noto_Sans','Open_Sans',sans-serif] text-[14px] text-[#4c4c4c]">
      <TopPanel />
      <div className="flex min-h-0 flex-1">
        <Launcher />
        <Workspace />
      </div>
      <Wizard />
    </div>
  );
}
